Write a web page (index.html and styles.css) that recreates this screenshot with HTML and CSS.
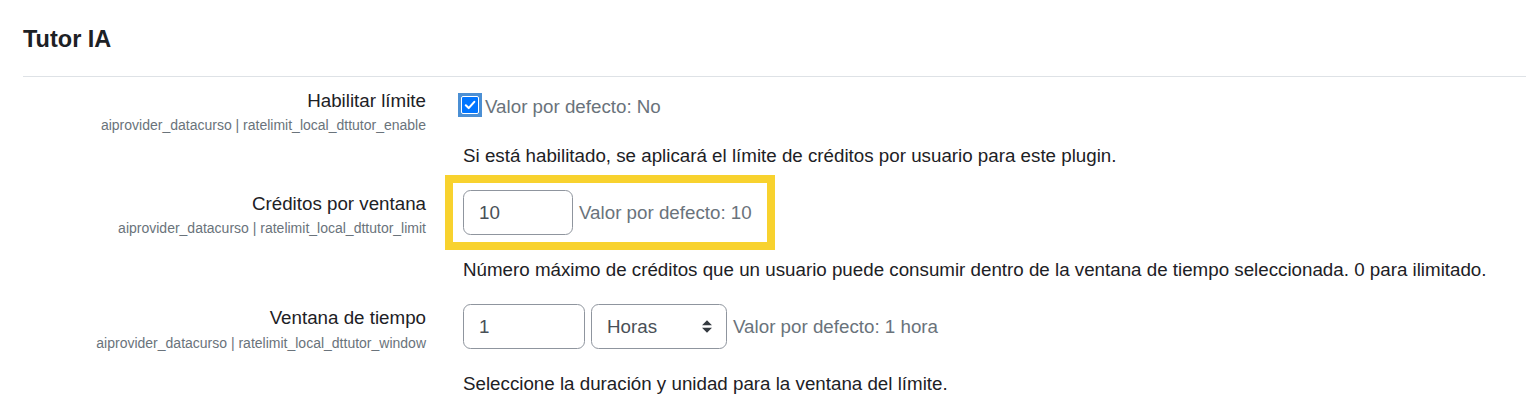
FILE: index.html
```html
<!DOCTYPE html>
<html lang="es">
<head>
<meta charset="utf-8">
<title>Tutor IA</title>
<link rel="stylesheet" href="styles.css">
</head>
<body>
<div class="page">
  <h3 class="heading">Tutor IA</h3>
  <hr class="rule">

  <div class="row">
    <div class="label-col">
      <div class="label">Habilitar límite</div>
      <div class="shortname">aiprovider_datacurso | ratelimit_local_dttutor_enable</div>
    </div>
    <div class="content-col">
      <div class="control control-check">
        <span class="cb-ring">
          <span class="cb" role="checkbox" aria-checked="true">
            <svg width="16" height="16" viewBox="0 0 16 16"><path d="M3.8 8.3 L6.7 11.1 L12.3 4.9" fill="none" stroke="#fff" stroke-width="2.1" stroke-linecap="round" stroke-linejoin="round"/></svg>
          </span>
        </span>
        <span class="default">Valor por defecto: No</span>
      </div>
      <div class="desc">Si está habilitado, se aplicará el límite de créditos por usuario para este plugin.</div>
    </div>
  </div>

  <div class="row">
    <div class="label-col">
      <div class="label">Créditos por ventana</div>
      <div class="shortname">aiprovider_datacurso | ratelimit_local_dttutor_limit</div>
    </div>
    <div class="content-col">
      <div class="highlight">
        <div class="input input-limit">10</div>
        <span class="default">Valor por defecto: 10</span>
      </div>
      <div class="desc">Número máximo de créditos que un usuario puede consumir dentro de la ventana de tiempo seleccionada. 0 para ilimitado.</div>
    </div>
  </div>

  <div class="row">
    <div class="label-col">
      <div class="label">Ventana de tiempo</div>
      <div class="shortname">aiprovider_datacurso | ratelimit_local_dttutor_window</div>
    </div>
    <div class="content-col">
      <div class="control">
        <div class="input input-window">1</div>
        <div class="select">
          <span>Horas</span>
          <svg class="arrows" width="10" height="13" viewBox="0 0 4 5"><path d="M2 0L0 2h4zm0 5L0 3h4z" fill="#343a40"/></svg>
        </div>
        <span class="default">Valor por defecto: 1 hora</span>
      </div>
      <div class="desc">Seleccione la duración y unidad para la ventana del límite.</div>
    </div>
  </div>
</div>
</body>
</html>
```

FILE: styles.css
```css
html, body {
  margin: 0;
  padding: 0;
  background: #ffffff;
}

body {
  font-family: "Liberation Sans", Arial, sans-serif;
  font-size: 18.75px;
  line-height: 1.5;
  color: #1d2125;
}

.page {
  padding: 25px 0 0 23px;
}

.heading {
  margin: 0;
  font-size: 23.5px;
  line-height: 28px;
  font-weight: 700;
  color: #1d2125;
}

.rule {
  margin: 23px 0 10px 0;
  border: 0;
  border-top: 1px solid #dee2e6;
  height: 0;
}

.row {
  display: grid;
  grid-template-columns: 403px 1fr;
  column-gap: 37px;
  margin-bottom: 20px;
}

.label-col {
  text-align: right;
}

.label {
  line-height: 28.125px;
  color: #1d2125;
}

.shortname {
  font-size: 14px;
  line-height: 21px;
  color: #6a737b;
}

.content-col {
  display: flex;
  flex-direction: column;
  align-items: flex-start;
}

.control {
  display: flex;
  align-items: center;
  gap: 6px;
}

.control-check {
  align-items: flex-start;
  gap: 3px;
  padding-top: 6px;
}

.cb-ring {
  display: flex;
  flex-shrink: 0;
  margin-left: -5px;
  padding: 3px;
  background: #4b8fd4;
}

.cb {
  width: 16px;
  height: 16px;
  background: #0075ff;
  border: 1px solid #ffffff;
  border-radius: 2px;
  display: flex;
}

.default {
  color: #6a737b;
  line-height: 28.125px;
}

.desc {
  margin-top: 21px;
  line-height: 28.125px;
  color: #1d2125;
}

.input {
  box-sizing: border-box;
  height: 45px;
  padding: 7.5px 15px;
  border: 1px solid #8f959e;
  border-radius: 7.5px;
  color: #495057;
  line-height: 28.125px;
}

.input-limit {
  width: 110px;
}

.input-window {
  width: 122px;
}

.highlight {
  display: flex;
  align-items: center;
  gap: 6px;
  border: 8px solid #f8d22e;
  padding: 7px 15px 7px 10px;
  margin: -15px 0 -15px -18px;
}

.select {
  box-sizing: border-box;
  width: 136px;
  height: 45px;
  padding: 7.5px 14px 7.5px 15px;
  border: 1px solid #8f959e;
  border-radius: 7.5px;
  color: #495057;
  display: flex;
  align-items: center;
  justify-content: space-between;
}

.arrows {
  display: block;
}
```
